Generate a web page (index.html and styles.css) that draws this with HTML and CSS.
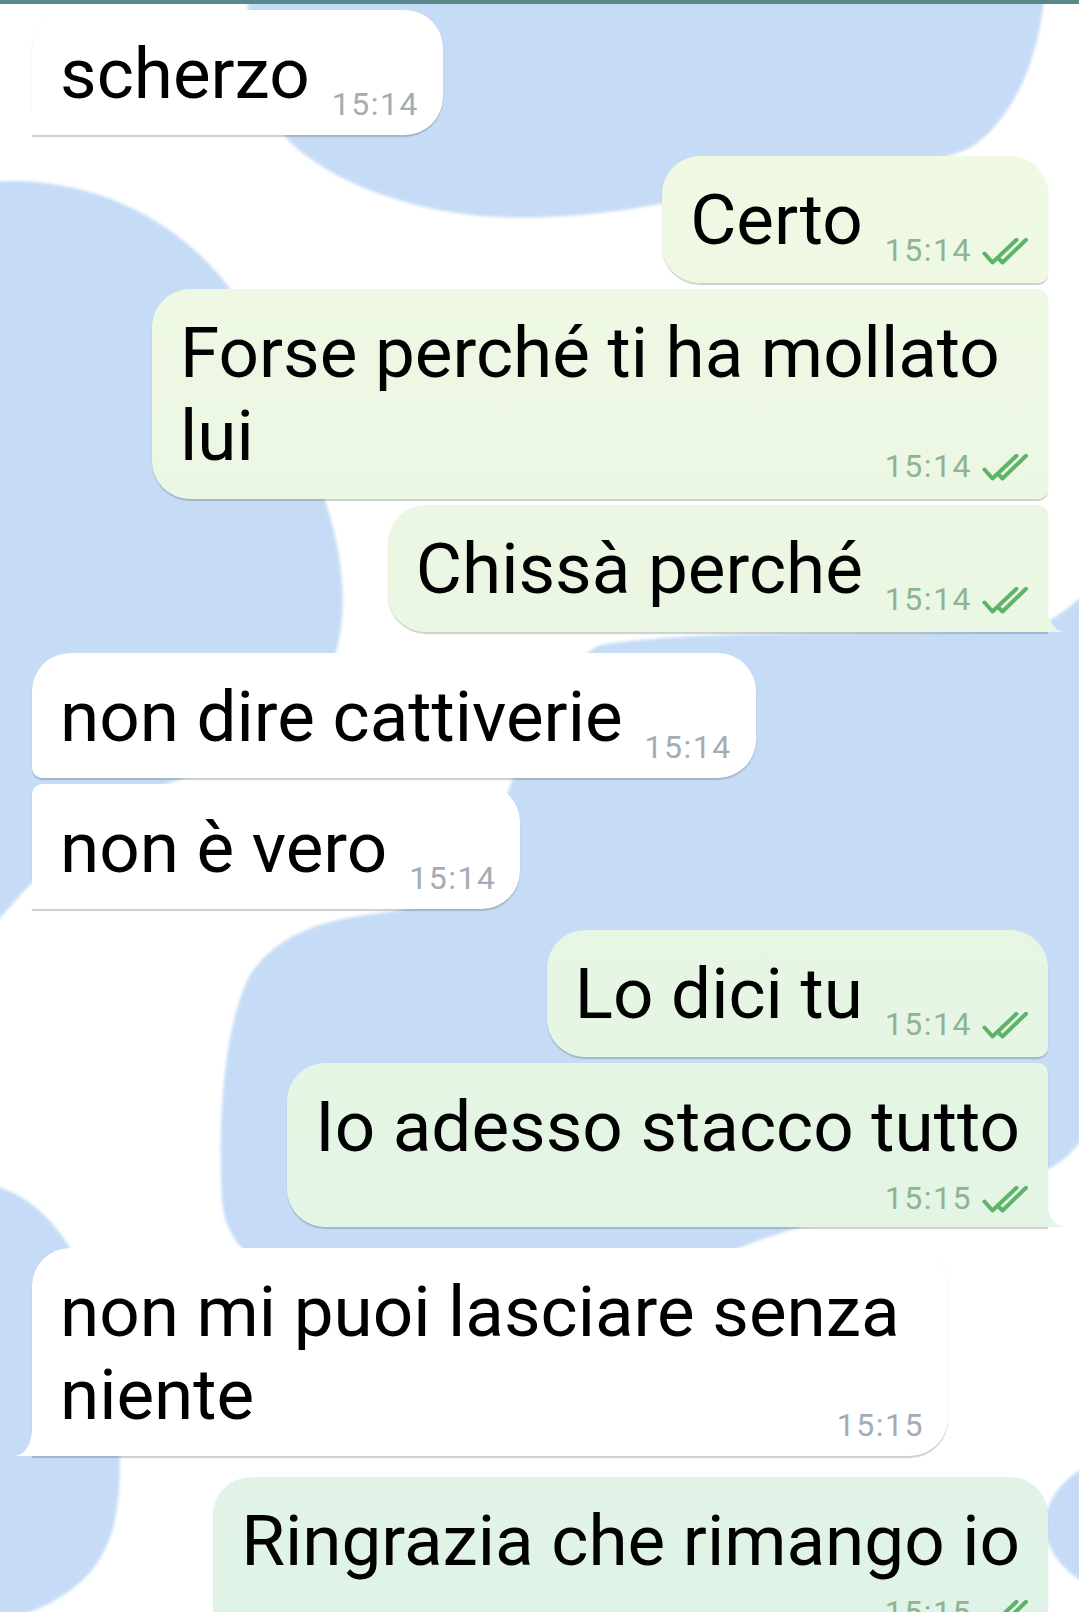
FILE: index.html
```html
<!DOCTYPE html>
<html lang="it">
<head>
<meta charset="utf-8">
<title>Chat</title>
<link rel="stylesheet" href="styles.css">
</head>
<body>
<div class="screen">
  <svg class="wallpaper" viewBox="0 0 1079 1612" width="1079" height="1612" aria-hidden="true">
    <defs><filter id="soft"><feGaussianBlur stdDeviation="1.6"/></filter></defs>
    <g fill="#c6dcf6" filter="url(#soft)">
      <path d="M245 -10 C255 60 265 110 290 142 C330 180 400 208 480 216 C560 222 640 210 700 195 C800 172 930 172 975 145 C1020 110 1040 50 1045 -10 Z"/>
      <path d="M-10 182 C60 176 140 198 200 255 C260 310 300 420 325 500 C345 560 350 620 330 670 C300 730 240 760 172 782 C100 810 40 870 -10 930 Z"/>
      <path d="M600 645 C700 628 900 636 1030 628 C1055 622 1070 605 1090 590 L1090 1130 C1075 1150 1060 1166 1040 1172 C950 1190 830 1215 760 1240 C650 1285 450 1310 320 1285 C250 1270 225 1240 222 1200 C218 1130 222 1030 250 975 C280 930 330 918 390 912 C440 905 480 860 505 800 C530 730 560 665 600 645 Z"/>
      <path d="M-10 1185 C40 1195 80 1245 100 1320 C118 1390 125 1460 116 1515 C106 1570 70 1605 -10 1625 Z"/>
      <ellipse cx="1190" cy="1525" rx="145" ry="85"/>
    </g>
  </svg>

  <div class="topbar"></div>

  <div class="messages">
    <div class="bubble in tail">scherzo<span class="meta">15:14</span></div>

    <div class="bubble out first gl">Certo<span class="meta">15:14<svg class="ck" viewBox="0 0 46 27" width="46" height="27"><path d="M2.5 15.5 L10.5 24.5 L34.5 1.8 M16.5 20.5 L20.5 24.5 L44 1.8"/></svg></span></div>

    <div class="bubble out mid gs">Forse perché ti ha mollato lui<span class="meta">15:14<svg class="ck" viewBox="0 0 46 27" width="46" height="27"><path d="M2.5 15.5 L10.5 24.5 L34.5 1.8 M16.5 20.5 L20.5 24.5 L44 1.8"/></svg></span></div>

    <div class="bubble out last tail gs">Chissà perché<span class="meta">15:14<svg class="ck" viewBox="0 0 46 27" width="46" height="27"><path d="M2.5 15.5 L10.5 24.5 L34.5 1.8 M16.5 20.5 L20.5 24.5 L44 1.8"/></svg></span></div>

    <div class="bubble in first gl">non dire cattiverie<span class="meta">15:14</span></div>

    <div class="bubble in last tail gs">non è vero<span class="meta">15:14</span></div>

    <div class="bubble out first gl">Lo dici tu<span class="meta">15:14<svg class="ck" viewBox="0 0 46 27" width="46" height="27"><path d="M2.5 15.5 L10.5 24.5 L34.5 1.8 M16.5 20.5 L20.5 24.5 L44 1.8"/></svg></span></div>

    <div class="bubble out last tail gs stacked"><div class="text">Io adesso stacco tutto</div><div class="meta own">15:15<svg class="ck" viewBox="0 0 46 27" width="46" height="27"><path d="M2.5 15.5 L10.5 24.5 L34.5 1.8 M16.5 20.5 L20.5 24.5 L44 1.8"/></svg></div></div>

    <div class="bubble in tail gl">non mi puoi lasciare senza niente<span class="meta">15:15</span></div>

    <div class="bubble out gl stacked"><div class="text">Ringrazia che rimango io</div><div class="meta own">15:15<svg class="ck" viewBox="0 0 46 27" width="46" height="27"><path d="M2.5 15.5 L10.5 24.5 L34.5 1.8 M16.5 20.5 L20.5 24.5 L44 1.8"/></svg></div></div>
  </div>
</div>
</body>
</html>
```

FILE: styles.css
```css
* { box-sizing: border-box; }

html, body {
  margin: 0;
  padding: 0;
  background: #ffffff;
}

body {
  font-family: Roboto, "Noto Sans", "Liberation Sans", sans-serif;
  overflow: hidden;
}

.screen {
  position: relative;
  width: 1079px;
  height: 1612px;
  overflow: hidden;
  background: #ffffff;
}

.wallpaper {
  position: absolute;
  left: 0;
  top: 0;
  z-index: 0;
}

.topbar {
  position: relative;
  z-index: 1;
  height: 4px;
  background: #58888a;
}

.messages {
  position: relative;
  z-index: 1;
  display: flex;
  flex-direction: column;
  padding-top: 6px;
}

.gs { margin-top: 6px; }
.gl { margin-top: 21px; }

.bubble {
  position: relative;
  padding: 22px 24px 20px 28px;
  font-size: 71px;
  line-height: 83px;
  color: #000000;
  border-radius: 38px;
  box-shadow: 0 1.5px 1px rgba(70, 90, 80, 0.28);
}

.bubble.in {
  align-self: flex-start;
  margin-left: 32px;
  max-width: 916px;
  background: #ffffff;
}

.bubble.out {
  align-self: flex-end;
  margin-right: 31px;
  max-width: 896px;
  padding-right: 20px;
  background: linear-gradient(180deg, #f1f9e3 0%, #e8f6e3 55%, #dff3e7 100%) fixed;
}

/* grouping radii */
.in.first { border-bottom-left-radius: 10px; }
.in.last { border-top-left-radius: 10px; }
.out.first { border-bottom-right-radius: 10px; }
.out.mid { border-top-right-radius: 10px; border-bottom-right-radius: 10px; }
.out.last { border-top-right-radius: 10px; }

/* tails */
.in.tail { border-bottom-left-radius: 0; }
.out.tail { border-bottom-right-radius: 0; }

.tail::after {
  content: "";
  position: absolute;
  bottom: 0;
  width: 17px;
  height: 26px;
  background: inherit;
}

.in.tail::after {
  left: -17px;
  -webkit-mask: radial-gradient(17px 26px at 0 0, transparent 97%, #000 100%);
  mask: radial-gradient(17px 26px at 0 0, transparent 97%, #000 100%);
}

.out.tail::after {
  right: -16px;
  -webkit-mask: radial-gradient(17px 26px at 100% 0, transparent 97%, #000 100%);
  mask: radial-gradient(17px 26px at 100% 0, transparent 97%, #000 100%);
}

/* timestamp + ticks: floated to the bubble's right edge on the last line */
.meta {
  float: right;
  margin: 62px 0 0 22px;
  font-size: 32px;
  line-height: 20px;
  letter-spacing: 1.5px;
  white-space: nowrap;
}

.in .meta { color: #a3adb3; }
.out .meta { color: #8fb492; }

.ck {
  display: inline-block;
  margin: -5px 0 -2px 10px;
  vertical-align: -2px;
}

.ck path {
  fill: none;
  stroke: #5cb469;
  stroke-width: 4;
  stroke-linecap: round;
  stroke-linejoin: round;
}

/* meta on its own line */
.stacked { padding-bottom: 13px; }

.stacked .text { margin-right: 8px; }

.meta.own {
  float: none;
  display: block;
  margin: 14px 0 0 0;
  line-height: 32px;
  text-align: right;
}
```
